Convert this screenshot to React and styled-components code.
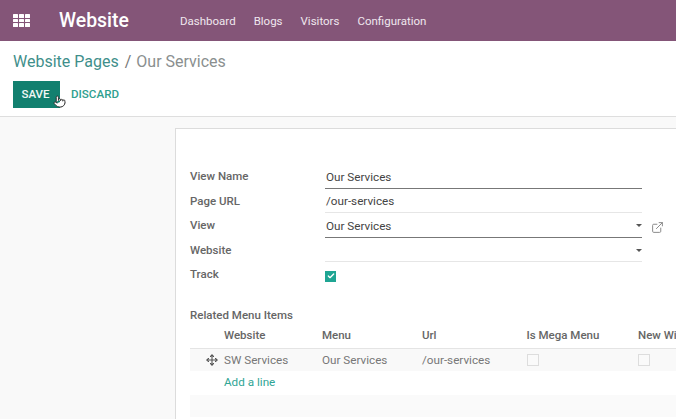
import React from "react";
import styled, { createGlobalStyle } from "styled-components";
import { Pointer, Move, ExternalLink, Check } from "lucide-react";

const GlobalStyle = createGlobalStyle`
  html, body {
    margin: 0;
    padding: 0;
    height: 100%;
    overflow: hidden;
    background: #f9f9f9;
    font-family: Roboto, "Noto Sans", sans-serif;
  }
  #root {
    height: 100%;
  }
`;

const Page = styled.div`
  width: 676px;
  height: 419px;
  display: flex;
  flex-direction: column;
  overflow: hidden;
`;

const NavBar = styled.header`
  height: 41px;
  flex: none;
  background: #845578;
  display: flex;
  align-items: center;
  padding-left: 13px;
  color: #fff;
`;

const AppsGrid = styled.span`
  width: 17px;
  height: 13px;
  display: grid;
  grid-template-columns: repeat(3, 5px);
  grid-template-rows: repeat(3, 3.6px);
  gap: 1px;
  margin-right: 29px;

  i {
    background: #fff;
    border-radius: 0.5px;
  }
`;

const Brand = styled.div`
  font-size: 19.4px;
  font-weight: 500;
  width: 121px;
`;

const NavLink = styled.a`
  font-size: 11.5px;
  color: #efe7ee;
  margin-right: 18px;
`;

const ControlPanel = styled.div`
  height: 76px;
  flex: none;
  background: #fff;
  border-bottom: 1px solid #dedede;
  padding: 11px 13px 0;
  box-sizing: border-box;
`;

const Breadcrumb = styled.div`
  font-size: 16px;
  line-height: 19px;
  color: #8a8f8f;
`;

const CrumbLink = styled.span`
  color: #3f8f8b;
`;

const CrumbSep = styled.span`
  margin: 0 5px 0 6px;
  color: #777;
`;

const Buttons = styled.div`
  display: flex;
  align-items: center;
  margin-top: 10px;
  position: relative;
`;

const SaveButton = styled.button`
  width: 47px;
  height: 27px;
  border: 0;
  padding: 0 2px 2px 0;
  background: #12806f;
  color: #f2f8f6;
  font: 500 11.5px Roboto, sans-serif;
  text-align: center;
`;

const DiscardButton = styled.button`
  border: 0;
  background: none;
  padding: 0 0 2px;
  margin-left: 11px;
  color: #2fa08f;
  font: 500 11.6px Roboto, sans-serif;
`;

const HandCursor = styled(Pointer)`
  position: absolute;
  left: 40px;
  top: 14px;
  width: 13px;
  height: 13px;
  fill: #fff;
  color: #222;
`;

const Content = styled.main`
  flex: 1;
  min-height: 0;
  background: #f9f9f9;
  padding: 11px 0 0 175px;
`;

const Sheet = styled.section`
  background: #fff;
  border: 1px solid #dcdcdc;
  border-right: 0;
  border-bottom: 0;
  height: 100%;
  box-sizing: border-box;
  padding: 37px 0 0 14px;
  overflow: hidden;
`;

const FormRow = styled.div`
  display: flex;
  align-items: center;
  height: 24.5px;
`;

const Label = styled.label`
  width: 135px;
  flex: none;
  font-size: 11.5px;
  font-weight: 500;
  color: #666;
  margin-top: -4px;
`;

const Field = styled.div`
  width: 317px;
  height: 22.5px;
  margin-bottom: 2px;
  box-sizing: border-box;
  border-bottom: 1px solid ${(p) => (p.$active ? "#777" : "#e6e6e6")};
  display: flex;
  align-items: center;
  justify-content: space-between;
  padding: 0 0 0 1px;
  font-size: 11.7px;
  color: #444;
`;

const Caret = styled.span`
  width: 0;
  height: 0;
  border-left: 3px solid transparent;
  border-right: 3px solid transparent;
  border-top: 3px solid #555;
`;

const OpenLink = styled(ExternalLink)`
  width: 13px;
  height: 13px;
  margin-left: 9px;
  color: #888;
`;

const Checkbox = styled.span`
  width: ${(p) => (p.$checked ? "11px" : "12px")};
  height: ${(p) => (p.$checked ? "11px" : "12px")};
  display: flex;
  align-items: center;
  justify-content: center;
  box-sizing: border-box;
  border: ${(p) => (p.$checked ? "0" : "1px solid #ddd")};
  background: ${(p) => (p.$checked ? "#1fa593" : "#fafafa")};
  color: #fff;
`;

const SectionLabel = styled.div`
  font-size: 11.5px;
  font-weight: 500;
  color: #666;
  margin-top: 19px;
  line-height: 14px;
`;

const TableWrap = styled.div`
  margin-top: 2px;
  width: 600px;
`;

const GridRow = styled.div`
  display: grid;
  grid-template-columns: 34px 98px 100px 104.5px 111.5px 100px;
  align-items: center;
  white-space: nowrap;
`;

const HeadRow = styled(GridRow)`
  height: 25px;
  padding-bottom: 1px;
  box-sizing: border-box;
  font-size: 11.5px;
  font-weight: 500;
  color: #666;
  border-bottom: 1px solid #e4e4e4;
`;

const BodyRow = styled(GridRow)`
  height: 22px;
  background: #f9f9f9;
  font-size: 11.7px;
  color: #777;
`;

const Grip = styled(Move)`
  width: 12px;
  height: 12px;
  color: #555;
  margin-left: 16px;
`;

const AddRow = styled.div`
  height: 22px;
  margin-bottom: 2px;
  padding-left: 34px;
  display: flex;
  align-items: center;
  font-size: 11.7px;
  color: #2fa595;
`;

const FooterBand = styled.div`
  height: 22px;
  background: #fafafa;
`;

const navItems = ["Dashboard", "Blogs", "Visitors", "Configuration"];
const columns = ["Website", "Menu", "Url", "Is Mega Menu", "New Window"];

const App = () => {
  return (
    <Page>
      <GlobalStyle />
      <NavBar>
        <AppsGrid>
          {Array.from({ length: 9 }).map((_, idx) => (
            <i key={idx} />
          ))}
        </AppsGrid>
        <Brand>Website</Brand>
        {navItems.map((item) => (
          <NavLink key={item}>{item}</NavLink>
        ))}
      </NavBar>
      <ControlPanel>
        <Breadcrumb>
          <CrumbLink>Website Pages</CrumbLink>
          <CrumbSep>/</CrumbSep>
          Our Services
        </Breadcrumb>
        <Buttons>
          <SaveButton>SAVE</SaveButton>
          <DiscardButton>DISCARD</DiscardButton>
          <HandCursor strokeWidth={1.6} />
        </Buttons>
      </ControlPanel>
      <Content>
        <Sheet>
          <FormRow>
            <Label>View Name</Label>
            <Field $active>Our Services</Field>
          </FormRow>
          <FormRow>
            <Label>Page URL</Label>
            <Field>/our-services</Field>
          </FormRow>
          <FormRow>
            <Label>View</Label>
            <Field $active>
              Our Services
              <Caret />
            </Field>
            <OpenLink strokeWidth={1.8} />
          </FormRow>
          <FormRow>
            <Label>Website</Label>
            <Field>
              <span />
              <Caret />
            </Field>
          </FormRow>
          <FormRow>
            <Label>Track</Label>
            <Checkbox $checked>
              <Check size={8} strokeWidth={4} />
            </Checkbox>
          </FormRow>
          <SectionLabel>Related Menu Items</SectionLabel>
          <TableWrap>
            <HeadRow>
              <span />
              {columns.map((col) => (
                <span key={col}>{col}</span>
              ))}
            </HeadRow>
            <BodyRow>
              <Grip strokeWidth={2.2} />
              <span>SW Services</span>
              <span>Our Services</span>
              <span>/our-services</span>
              <Checkbox />
              <Checkbox />
            </BodyRow>
            <AddRow>Add a line</AddRow>
            <FooterBand />
          </TableWrap>
        </Sheet>
      </Content>
    </Page>
  );
};

export default App;
